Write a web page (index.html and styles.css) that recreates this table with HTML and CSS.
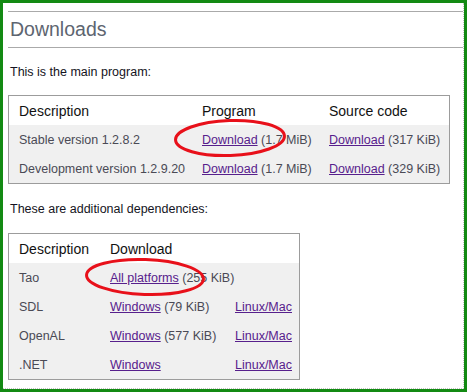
FILE: index.html
```html
<!DOCTYPE html>
<html lang="en">
<head>
<meta charset="utf-8">
<title>Downloads</title>
<link rel="stylesheet" href="styles.css">
</head>
<body>
<div class="frame">
  <div class="page">
    <h2 class="title">Downloads</h2>
    <p class="intro">This is the main program:</p>
    <table class="dl main">
      <colgroup><col class="m1"><col class="m2"><col class="m3"></colgroup>
      <thead>
        <tr><th>Description</th><th>Program</th><th>Source code</th></tr>
      </thead>
      <tbody>
        <tr><td>Stable version 1.2.8.2</td><td><a href="#">Download</a> (1.7 MiB)</td><td><a href="#">Download</a> (317 KiB)</td></tr>
        <tr><td>Development version 1.2.9.20</td><td><a href="#">Download</a> (1.7 MiB)</td><td><a href="#">Download</a> (329 KiB)</td></tr>
      </tbody>
    </table>
    <p class="intro second">These are additional dependencies:</p>
    <table class="dl deps">
      <colgroup><col class="d1"><col class="d2"><col class="d3"></colgroup>
      <thead>
        <tr><th>Description</th><th>Download</th><th></th></tr>
      </thead>
      <tbody>
        <tr><td>Tao</td><td><a href="#">All platforms</a> (255 KiB)</td><td></td></tr>
        <tr><td>SDL</td><td><a href="#">Windows</a> (79 KiB)</td><td><a href="#">Linux/Mac</a></td></tr>
        <tr><td>OpenAL</td><td><a href="#">Windows</a> (577 KiB)</td><td><a href="#">Linux/Mac</a></td></tr>
        <tr><td>.NET</td><td><a href="#">Windows</a></td><td><a href="#">Linux/Mac</a></td></tr>
      </tbody>
    </table>
  </div>
  <svg class="marks" viewBox="0 0 467 392" width="467" height="392" aria-hidden="true">
    <ellipse cx="230" cy="138" rx="54.5" ry="17.5" transform="rotate(-2 230 138)" fill="none" stroke="#e8101a" stroke-width="3"/>
    <ellipse cx="145" cy="277" rx="58.5" ry="17.5" transform="rotate(2 145 277)" fill="none" stroke="#e8101a" stroke-width="3"/>
  </svg>
</div>
</body>
</html>
```
FILE: styles.css
```css
html, body {
  margin: 0;
  padding: 0;
  background: #fff;
}

body {
  width: 467px;
  height: 392px;
  overflow: hidden;
  font-family: "Liberation Sans", Arial, sans-serif;
}

.frame {
  box-sizing: border-box;
  position: relative;
  width: 467px;
  height: 392px;
  border: 3px solid #138a13;
  background: #fff;
}

.page {
  box-sizing: border-box;
  height: 100%;
  padding: 8px 0 0 5px;
  border-right: 1px dotted #c4c4c4;
  border-bottom: 1px dotted #c4c4c4;
}

.title {
  margin: 0;
  padding-left: 2px;
  border-top: 1px solid #aaa;
  border-bottom: 1px solid #aaa;
  font-size: 19.5px;
  line-height: 35px;
  font-weight: normal;
  color: #5d6570;
}

.intro {
  margin: 16px 0 15px 2px;
  font-size: 12.5px;
  line-height: 16px;
  color: #141422;
}

.intro.second {
  margin: 17px 0 16px 2px;
}

.dl {
  border-collapse: separate;
  border-spacing: 0;
  border: 1px solid #9c9c9c;
  table-layout: fixed;
}

.main { width: 442px; }
.deps { width: 292px; }

.m1 { width: 183px; }
.m2 { width: 127px; }
.m3 { width: 130px; }

.d1 { width: 91px; }
.d2 { width: 125px; }
.d3 { width: 74px; }

.dl th,
.dl td {
  height: 29px;
  padding: 0 0 0 10px;
  text-align: left;
  vertical-align: middle;
  white-space: nowrap;
  overflow: visible;
}

.dl th {
  font-size: 14px;
  font-weight: normal;
  color: #111;
  background: #fff;
}

.dl td {
  font-size: 12.5px;
  color: #4a4a55;
  background: #f0f0f0;
}

.dl a {
  color: #57208c;
  text-decoration: underline;
}

.marks {
  position: absolute;
  left: -3px;
  top: -3px;
  pointer-events: none;
}
```
